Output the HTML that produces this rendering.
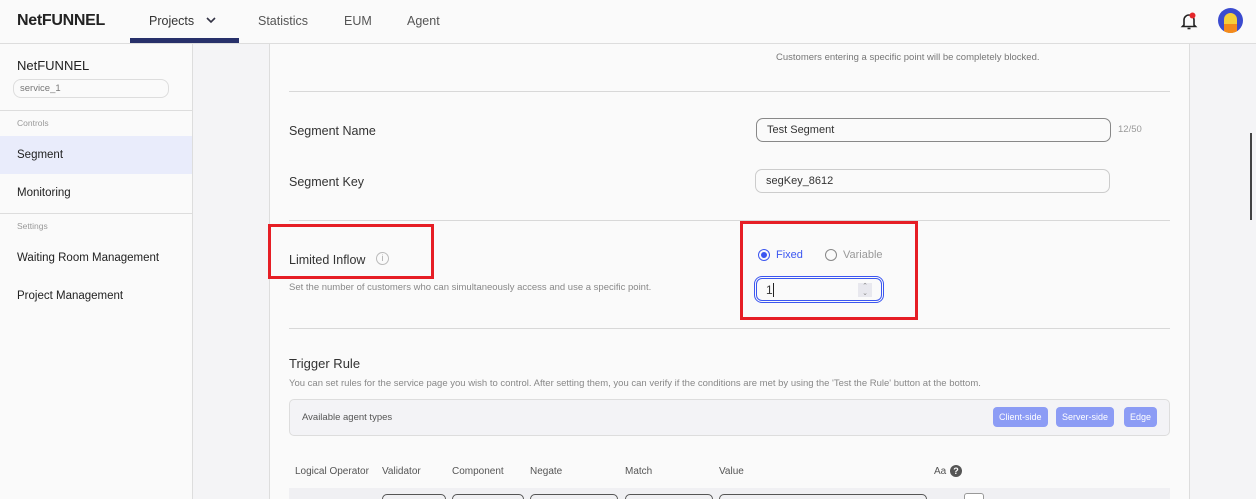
<!DOCTYPE html>
<html><head><style>
*{box-sizing:border-box;margin:0;padding:0}
html,body{width:1256px;height:499px;overflow:hidden}
body{background:#f4f4f6;font-family:"Liberation Sans",sans-serif;position:relative;color:#333}
.a{position:absolute}
.hdr{left:0;top:0;width:1256px;height:44px;background:#fafafa;border-bottom:1px solid #ddd}
.nav{font-size:12.5px;color:#555;top:14px}
.side{left:0;top:44px;width:193px;height:455px;background:#fafafa;border-right:1px solid #ddd}
.main{left:269px;top:44px;width:921px;height:455px;background:#fafafa;border-left:1px solid #ddd;border-right:1px solid #ddd}
.hr{height:1px;background:#d8d8d8;left:289px;width:881px}
.lbl{font-size:12.5px;color:#333}
.inp{border:1px solid #bbb;border-radius:7px;height:24px;font-size:11px;color:#333;padding:5px 10px;background:#fafafa}
.sm{font-size:9.5px;color:#777}
.tag{background:#8c9cf5;color:#fff;font-size:9px;border-radius:4px;height:20px;line-height:20px;padding:0 6px;top:407px}
.col{font-size:10px;color:#555;top:466px}
.red{border:3px solid #e61e25}
</style></head><body>
<div class="a hdr"></div>
<div class="a" style="left:17px;top:12px;font-size:16px;font-weight:bold;color:#222;letter-spacing:-0.3px">NetFUNNEL</div>
<div class="a nav" style="left:149px;color:#333">Projects</div>
<svg class="a" style="left:206px;top:17px" width="10" height="7"><path d="M1 1l4 4 4-4" stroke="#334" stroke-width="1.6" fill="none"/></svg>
<div class="a" style="left:130px;top:38px;width:109px;height:5px;background:#27306a"></div>
<div class="a nav" style="left:258px">Statistics</div>
<div class="a nav" style="left:344px">EUM</div>
<div class="a nav" style="left:407px">Agent</div>
<svg class="a" style="left:1180px;top:11px" width="18" height="20"><path d="M4 14V9a5 5 0 0 1 10 0v5l1.5 1.5h-13z" fill="none" stroke="#222" stroke-width="1.6"/><path d="M7.5 17.5h3" stroke="#222" stroke-width="1.6"/><circle cx="12.5" cy="4.5" r="3" fill="#e4272b"/></svg>
<div class="a" style="left:1218px;top:8px;width:25px;height:25px;border-radius:50%;background:#3b4bcf;overflow:hidden"><div class="a" style="left:6px;top:5px;width:13px;height:20px;border-radius:7px 7px 0 0;background:#f6cf3a"></div><div class="a" style="left:6px;top:16px;width:13px;height:9px;background:#f48a1c"></div></div>

<div class="a side"></div>
<div class="a" style="left:17px;top:58px;font-size:13px;color:#222">NetFUNNEL</div>
<div class="a" style="left:13px;top:79px;width:156px;height:19px;border:1px solid #ddd;border-radius:8px;font-size:9.5px;color:#777;padding:3px 6px">service_1</div>
<div class="a" style="left:0;top:110px;width:192px;height:1px;background:#ddd"></div>
<div class="a" style="left:17px;top:118px;font-size:8.5px;color:#999">Controls</div>
<div class="a" style="left:0;top:136px;width:192px;height:38px;background:#e9ecfb"></div>
<div class="a" style="left:17px;top:149px;font-size:11.5px;color:#222">Segment</div>
<div class="a" style="left:17px;top:187px;font-size:11.5px;color:#222">Monitoring</div>
<div class="a" style="left:0;top:213px;width:192px;height:1px;background:#ddd"></div>
<div class="a" style="left:17px;top:221px;font-size:8.5px;color:#999">Settings</div>
<div class="a" style="left:17px;top:252px;font-size:11.5px;color:#222">Waiting Room Management</div>
<div class="a" style="left:17px;top:290px;font-size:11.5px;color:#222">Project Management</div>

<div class="a main"></div>
<div class="a sm" style="left:776px;top:52px">Customers entering a specific point will be completely blocked.</div>
<div class="a hr" style="top:91px"></div>
<div class="a lbl" style="left:289px;top:124px">Segment Name</div>
<div class="a inp" style="left:756px;top:118px;width:355px;border-color:#888">Test Segment</div>
<div class="a sm" style="left:1118px;top:124px;color:#999">12/50</div>
<div class="a lbl" style="left:289px;top:175px">Segment Key</div>
<div class="a inp" style="left:755px;top:169px;width:355px;border-color:#ccc">segKey_8612</div>
<div class="a hr" style="top:220px"></div>
<div class="a red" style="left:268px;top:224px;width:166px;height:55px"></div>
<div class="a lbl" style="left:289px;top:253px">Limited Inflow</div>
<div class="a" style="left:376px;top:252px;width:13px;height:13px;border:1px solid #bbb;border-radius:50%;font-size:9px;color:#aaa;text-align:center;line-height:11px">i</div>
<div class="a sm" style="left:289px;top:282px;color:#888">Set the number of customers who can simultaneously access and use a specific point.</div>
<div class="a red" style="left:740px;top:221px;width:178px;height:99px"></div>
<div class="a" style="left:758px;top:249px;width:12px;height:12px;border:1.5px solid #3b56f0;border-radius:50%"><div class="a" style="left:1.5px;top:1.5px;width:6px;height:6px;border-radius:50%;background:#3b56f0"></div></div>
<div class="a" style="left:776px;top:249px;font-size:11px;color:#3b56f0">Fixed</div>
<div class="a" style="left:825px;top:249px;width:12px;height:12px;border:1px solid #888;border-radius:50%"></div>
<div class="a" style="left:843px;top:249px;font-size:11px;color:#999">Variable</div>
<div class="a" style="left:754px;top:276px;width:130px;height:27px;border:3px double #3b56f0;border-radius:8px;font-size:12px;padding:4px 9px">1<span style="border-left:1px solid #222;margin-left:0"></span></div>
<div class="a" style="left:858px;top:283px;width:14px;height:14px;background:#e8e8ee;font-size:7px;color:#888;text-align:center;line-height:7px">⌃<br>⌄</div>
<div class="a hr" style="top:328px"></div>
<div class="a lbl" style="left:289px;top:356px;font-size:13px">Trigger Rule</div>
<div class="a sm" style="left:289px;top:378px;color:#888">You can set rules for the service page you wish to control. After setting them, you can verify if the conditions are met by using the 'Test the Rule' button at the bottom.</div>
<div class="a" style="left:289px;top:399px;width:881px;height:37px;background:#f3f3f6;border:1px solid #ddd;border-radius:5px"></div>
<div class="a" style="left:302px;top:412px;font-size:9.5px;color:#555">Available agent types</div>
<div class="a tag" style="left:993px">Client-side</div>
<div class="a tag" style="left:1056px">Server-side</div>
<div class="a tag" style="left:1124px">Edge</div>
<div class="a col" style="left:295px">Logical Operator</div>
<div class="a col" style="left:382px">Validator</div>
<div class="a col" style="left:452px">Component</div>
<div class="a col" style="left:530px">Negate</div>
<div class="a col" style="left:625px">Match</div>
<div class="a col" style="left:719px">Value</div>
<div class="a col" style="left:934px">Aa</div>
<div class="a" style="left:950px;top:465px;width:12px;height:12px;border-radius:50%;background:#555;color:#fff;font-size:9px;text-align:center;line-height:12px;font-weight:bold">?</div>
<div class="a" style="left:289px;top:488px;width:881px;height:11px;background:#f0f0f3"></div>
<div class="a" style="left:382px;top:494px;width:64px;height:10px;border:1px solid #555;border-radius:5px"></div>
<div class="a" style="left:452px;top:494px;width:72px;height:10px;border:1px solid #555;border-radius:5px"></div>
<div class="a" style="left:530px;top:494px;width:88px;height:10px;border:1px solid #555;border-radius:5px"></div>
<div class="a" style="left:625px;top:494px;width:88px;height:10px;border:1px solid #555;border-radius:5px"></div>
<div class="a" style="left:719px;top:494px;width:208px;height:10px;border:1px solid #555;border-radius:5px"></div>
<div class="a" style="left:964px;top:493px;width:20px;height:10px;border:1px solid #999;border-radius:3px;background:#fff"></div>
<div class="a" style="left:1250px;top:133px;width:2px;height:87px;background:#444"></div>
</body></html>
